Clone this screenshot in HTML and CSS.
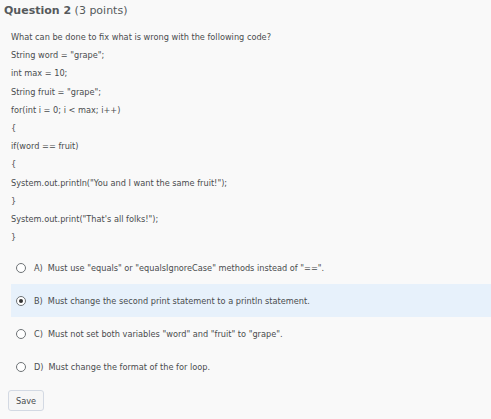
FILE: index.html
```html
<!DOCTYPE html>
<html>
<head>
<meta charset="utf-8">
<link rel="stylesheet" href="styles.css">
</head>
<body>
<div class="page">
  <h2 class="qtitle"><b>Question 2</b> <span class="pts">(3 points)</span></h2>
  <div class="qbody">
    <p>What can be done to fix what is wrong with the following code?</p>
    <p>String word = "grape";</p>
    <p>int max = 10;</p>
    <p>String fruit = "grape";</p>
    <p>for(int i = 0; i &lt; max; i++)</p>
    <p>{</p>
    <p>if(word == fruit)</p>
    <p>{</p>
    <p>System.out.println("You and I want the same fruit!");</p>
    <p>}</p>
    <p>System.out.print("That's all folks!");</p>
    <p>}</p>
  </div>
  <div class="options">
    <div class="opt"><span class="radio"></span><span class="lbl">A)</span><span>Must use "equals" or "equalsIgnoreCase" methods instead of "==".</span></div>
    <div class="opt sel"><span class="radio on"></span><span class="lbl">B)</span><span>Must change the second print statement to a println statement.</span></div>
    <div class="opt"><span class="radio"></span><span class="lbl">C)</span><span>Must not set both variables "word" and "fruit" to "grape".</span></div>
    <div class="opt"><span class="radio"></span><span class="lbl">D)</span><span>Must change the format of the for loop.</span></div>
  </div>
  <button class="save">Save</button>
</div>
</body>
</html>
```
FILE: styles.css
```css
html, body {
  margin: 0;
  padding: 0;
  background: #f9f9f9;
}
body {
  font-family: "DejaVu Sans", Verdana, sans-serif;
  color: #494c4e;
}
.page {
  padding: 2px 0 0 0;
}
.qtitle {
  margin: 0 0 0 4px;
  font-size: 11px;
  font-weight: normal;
  color: #565a5c;
  line-height: 18px;
}
.qtitle b {
  font-weight: bold;
}
.qbody {
  padding: 8px 0 0 11px;
  font-size: 8.2px;
}
.qbody p {
  margin: 0;
  line-height: 18.2px;
}
.options {
  margin-top: 5px;
  padding-left: 11px;
}
.opt {
  display: flex;
  align-items: center;
  height: 33px;
  font-size: 8.2px;
  padding-left: 5px;
}
.opt.sel {
  background: #e7f1fb;
}
.radio {
  width: 8px;
  height: 8px;
  border: 1.2px solid #6e7376;
  border-radius: 50%;
  background: #fff;
  display: flex;
  align-items: center;
  justify-content: center;
  margin-right: 8px;
}
.radio.on::after {
  content: "";
  width: 4.5px;
  height: 4.5px;
  border-radius: 50%;
  background: #333;
}
.lbl {
  margin-right: 5px;
}
.save {
  margin: 7px 0 0 8px;
  width: 36px;
  height: 21px;
  font-family: "DejaVu Sans", Verdana, sans-serif;
  font-size: 8.2px;
  color: #494c4e;
  background: #f6f6f6;
  border: 1px solid #d3d9e3;
  border-radius: 3px;
  padding: 0;
}
```
